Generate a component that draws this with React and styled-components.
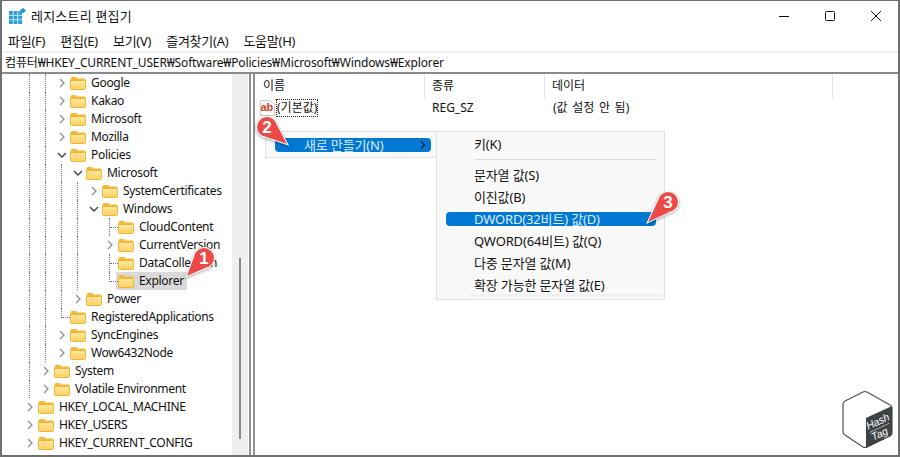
import React from "react";
import styled, { createGlobalStyle } from "styled-components";

const GlobalStyle = createGlobalStyle`
  html, body {
    margin: 0;
    padding: 0;
    background: #fff;
  }
`;

const FONT = `"Noto Sans", "Noto Sans CJK KR", sans-serif`;

const Window = styled.div`
  position: relative;
  box-sizing: border-box;
  width: 900px;
  height: 457px;
  border: 2px solid #707070;
  border-top-width: 1px;
  background: #fff;
  color: #111;
  font-family: ${FONT};
  font-size: 12px;
  line-height: 18px;
  overflow: hidden;
  display: flex;
  flex-direction: column;
`;

const TitleBar = styled.div`
  height: 30px;
  display: flex;
  align-items: center;
  padding-left: 7px;
  flex: none;
`;

const TitleText = styled.span`
  margin-left: 4px;
  font-size: 13px;
  letter-spacing: 0.2px;
`;

const WindowButtons = styled.div`
  margin-left: auto;
  display: flex;
  padding-right: 17px;
  gap: 36px;
`;

const MenuBar = styled.div`
  height: 20px;
  flex: none;
  display: flex;
  align-items: center;
  padding-left: 6px;
  gap: 15px;
  font-size: 13px;
  letter-spacing: -0.25px;
`;

const AddressBar = styled.div`
  flex: none;
  height: 19px;
  border-top: 2px solid #f0f0f0;
  border-bottom: 2px solid #8b8b8b;
  padding-left: 3px;
  display: flex;
  align-items: center;
  white-space: nowrap;
  letter-spacing: -0.15px;
`;

const Body = styled.div`
  flex: 1;
  min-height: 0;
  display: flex;
`;

const TreePanel = styled.div`
  width: 246px;
  flex: none;
  display: flex;
  padding-right: 1px;
  border-right: 2px solid #8f8f96;
  overflow: hidden;
`;

const TreeRows = styled.div`
  width: 230px;
  flex: none;
  padding-left: 20px;
  box-sizing: border-box;
  letter-spacing: -0.3px;
`;

const Row = styled.div`
  height: 18px;
  display: flex;
  align-items: stretch;
  white-space: nowrap;
`;

const Cell = styled.div`
  width: 16px;
  height: 18px;
  flex: none;
  position: relative;
  display: flex;
  align-items: center;
  justify-content: center;
`;

const Guide = styled.div`
  width: 0;
  border-left: 1px dotted #777;
  align-self: ${(p) => (p.$half ? "flex-start" : "stretch")};
  height: ${(p) => (p.$half ? "10px" : "auto")};
  margin-left: -1px;
`;

const Hook = styled.div`
  position: absolute;
  left: 8px;
  top: 9px;
  width: 8px;
  border-top: 1px dotted #777;
`;

const Node = styled.div`
  display: flex;
  align-items: center;
  height: 18px;
  padding-right: 3px;
  background: ${(p) => (p.$selected ? "#d9d9d9" : "transparent")};
  margin-left: ${(p) => (p.$selected ? "-2px" : "0")};
  padding-left: ${(p) => (p.$selected ? "2px" : "0")};
`;

const NodeLabel = styled.span`
  margin-left: 5px;
`;

const ScrollTrack = styled.div`
  width: 16px;
  flex: none;
  background: #efefef;
  padding: 184px 0 0 7px;
  box-sizing: border-box;
`;

const ScrollThumb = styled.div`
  width: 2px;
  height: 181px;
  background: #8a8a8a;
`;

const ListPanel = styled.div`
  flex: 1;
  margin-left: 2px;
  border-left: 2px solid #8f8f96;
  min-width: 0;
`;

const ListHeader = styled.div`
  display: flex;
  height: 25px;
`;

const HeaderCell = styled.div`
  width: ${(p) => p.$width}px;
  box-sizing: border-box;
  padding-left: ${(p) => p.$pad}px;
  border-right: 1px solid #e5e5e5;
  line-height: 24px;
`;

const ListRow = styled.div`
  display: flex;
  height: 18px;
  align-items: center;
`;

const NameCell = styled.div`
  width: 170px;
  flex: none;
  padding-left: 5px;
  box-sizing: border-box;
  display: flex;
  align-items: center;
`;

const ValueCell = styled.div`
  width: ${(p) => p.$width}px;
  flex: none;
  padding-left: ${(p) => p.$pad}px;
  box-sizing: border-box;
  word-spacing: ${(p) => (p.$wide ? "1.5px" : "normal")};
`;

const FocusLabel = styled.span`
  margin-left: 1px;
  outline: 1px dotted #222;
  outline-offset: -1px;
  padding: 0 1px;
  height: 18px;
`;

const Menu = styled.div`
  position: absolute;
  box-sizing: border-box;
  left: ${(p) => p.$left}px;
  top: ${(p) => p.$top}px;
  width: ${(p) => p.$width}px;
  height: ${(p) => p.$height}px;
  background: #f9f9f9;
  border: 1px solid #e2e2e2;
  display: flex;
  flex-direction: column;
  padding: ${(p) => p.$pad};
  font-size: 13px;
  letter-spacing: -0.15px;
`;

const MenuItem = styled.div`
  height: ${(p) => (p.$tall ? 22 : 14)}px;
  width: ${(p) => (p.$width ? `${p.$width}px` : "auto")};
  box-sizing: border-box;
  flex: none;
  border-radius: 4px;
  display: flex;
  align-items: center;
  padding-left: ${(p) => p.$inset}px;
  background: ${(p) => (p.$active ? "#0078d4" : "transparent")};
  color: ${(p) => (p.$active ? "#dfeefa" : "#111")};
  position: relative;
  white-space: nowrap;
`;

const ActiveSlot = styled.div`
  height: 22px;
  display: flex;
  align-items: center;
  flex: none;
`;

const Divider = styled.div`
  height: 1px;
  background: #d9d9d9;
  margin: 4px 7px 4px 29px;
  flex: none;
`;

const FootLine = styled.div`
  height: 3px;
  background: #f0f0f0;
  margin: -2px 1px 0 23px;
  flex: none;
`;

const SubArrow = styled.svg`
  position: absolute;
  right: 4px;
  top: 3px;
`;

const Overlay = styled.svg`
  position: absolute;
  left: ${(p) => p.$left}px;
  top: ${(p) => p.$top}px;
  overflow: visible;
  pointer-events: none;
`;

const Folder = () => (
  <svg width="16" height="14" viewBox="0 0 16 14">
    <defs>
      <linearGradient id="fold" x1="0" y1="0" x2="0" y2="1">
        <stop offset="0" stopColor="#ffe9a6" />
        <stop offset="1" stopColor="#fbd05b" />
      </linearGradient>
    </defs>
    <path d="M0.5 2.5 Q0.5 1 2 1 H6 L7.5 2.6 H14.5 Q15.5 2.6 15.5 3.6 V5 H0.5Z" fill="#f5b92f" />
    <path d="M0.5 4.5 H15.5 V12.5 Q15.5 13.5 14.5 13.5 H1.5 Q0.5 13.5 0.5 12.5Z" fill="url(#fold)" stroke="#eeb63e" strokeWidth="1" />
  </svg>
);

const Chevron = ({ open }) =>
  open ? (
    <svg width="10" height="10" viewBox="0 0 10 10" fill="none">
      <path d="M1 3 L5 7 L9 3" stroke="#404040" strokeWidth="1.3" />
    </svg>
  ) : (
    <svg width="10" height="10" viewBox="0 0 10 10" fill="none">
      <path d="M3 1 L7 5 L3 9" stroke="#8f8f8f" strokeWidth="1.3" />
    </svg>
  );

const AppIcon = () => (
  <svg width="18" height="16" viewBox="0 0 18 16">
    <rect x="0" y="3" width="13" height="13" fill="#2b9fdf" />
    <path d="M0 7.4H13M0 11.7H13M4.3 3V16M8.7 3V16" stroke="#d6eefa" strokeWidth="0.9" />
    <path d="M14 0 L17 2.6 L14 5.2 L11 2.6Z" fill="#1f8fd0" />
  </svg>
);

const AbIcon = () => (
  <svg width="15" height="16" viewBox="0 0 15 16">
    <path d="M0.5 0.5 H10 L14.5 4.5 V15.5 H0.5Z" fill="#fff" stroke="#c9c9c9" />
    <text x="0.5" y="11" fontFamily="Liberation Sans, sans-serif" fontWeight="700" fontSize="11" fill="#d83b1c">ab</text>
  </svg>
);

const WinMin = () => (
  <svg width="10" height="10" viewBox="0 0 10 10"><path d="M0 5.5H10" stroke="#111" /></svg>
);
const WinMax = () => (
  <svg width="10" height="10" viewBox="0 0 10 10" fill="none"><rect x="0.5" y="0.5" width="9" height="9" rx="1" stroke="#111" /></svg>
);
const WinClose = () => (
  <svg width="10" height="10" viewBox="0 0 10 10" fill="none"><path d="M0 0L10 10M10 0L0 10" stroke="#111" /></svg>
);

const Badge = ({ n, cx, cy, tipX, tipY }) => {
  const dx = tipX - cx;
  const dy = tipY - cy;
  const len = Math.hypot(dx, dy);
  const ux = dx / len;
  const uy = dy / len;
  const base = 8;
  const a = `${30 + ux * 6 - uy * base},${30 + uy * 6 + ux * base}`;
  const b = `${30 + ux * 6 + uy * base},${30 + uy * 6 - ux * base}`;
  const tip = `${30 + dx},${30 + dy}`;
  return (
    <Overlay $left={cx - 30} $top={cy - 30} width="60" height="60" viewBox="0 0 60 60">
      <g style={{ filter: "drop-shadow(0 1px 1.5px rgba(0,0,0,.35))" }}>
        <polygon points={`${a} ${tip} ${b}`} fill="#fff" stroke="#fff" strokeWidth="2" />
        <circle cx="30" cy="30" r="11" fill="#fff" />
      </g>
      <polygon points={`${a} ${tip} ${b}`} fill="#ea4a48" />
      <circle cx="30" cy="30" r="10" fill="#ea4a48" />
      <text x="30" y="36" textAnchor="middle" fontFamily="Liberation Sans, sans-serif" fontWeight="700" fontSize="17" fill="#fff">{n}</text>
    </Overlay>
  );
};

const HashTagLogo = () => (
  <Overlay $left={838} $top={388} width="54" height="60" viewBox="0 0 54 60">
    <path d="M3 15 Q3 13 5 12 L23 3 Q25 2 27 3 L50 16 Q52 17 52 19 V44 Q52 46 50 47 L27 58 Q25 59 23 58 L5 46 Q3 45 3 43Z" fill="#fff" stroke="#4a4f52" strokeWidth="1.2" />
    <path d="M26 29 L52 17 V44 Q52 46 50 47 L26 59Z" fill="#3d4245" />
    <g transform="rotate(-25 39 38)" fill="#fff" fontFamily="Liberation Sans, sans-serif" fontStyle="italic">
      <text x="28" y="36" fontSize="10.5">Hash</text>
      <path d="M28 39H50" stroke="#c9c9c9" strokeWidth="0.7" />
      <text x="28" y="48" fontSize="10.5">Tag</text>
    </g>
  </Overlay>
);

const tree = [
  { label: "Google", depth: 2, kind: "closed", guides: [0, 1] },
  { label: "Kakao", depth: 2, kind: "closed", guides: [0, 1] },
  { label: "Microsoft", depth: 2, kind: "closed", guides: [0, 1] },
  { label: "Mozilla", depth: 2, kind: "closed", guides: [0, 1] },
  { label: "Policies", depth: 2, kind: "open", guides: [0, 1] },
  { label: "Microsoft", depth: 3, kind: "open", guides: [0, 1, 2] },
  { label: "SystemCertificates", depth: 4, kind: "closed", guides: [0, 1, 2, 3] },
  { label: "Windows", depth: 4, kind: "open", guides: [0, 1, 2, 3] },
  { label: "CloudContent", depth: 5, kind: "leaf", guides: [0, 1, 2, 3] },
  { label: "CurrentVersion", depth: 5, kind: "closed", guides: [0, 1, 2, 3] },
  { label: "DataCollection", depth: 5, kind: "leaf", guides: [0, 1, 2, 3] },
  { label: "Explorer", depth: 5, kind: "last", guides: [0, 1, 2, 3], selected: true },
  { label: "Power", depth: 3, kind: "closed", guides: [0, 1, 2] },
  { label: "RegisteredApplications", depth: 2, kind: "last", guides: [0, 1] },
  { label: "SyncEngines", depth: 2, kind: "closed", guides: [0, 1] },
  { label: "Wow6432Node", depth: 2, kind: "closed", guides: [0, 1] },
  { label: "System", depth: 1, kind: "closed", guides: [0] },
  { label: "Volatile Environment", depth: 1, kind: "closed", guides: [0] },
  { label: "HKEY_LOCAL_MACHINE", depth: 0, kind: "closed", guides: [] },
  { label: "HKEY_USERS", depth: 0, kind: "closed", guides: [] },
  { label: "HKEY_CURRENT_CONFIG", depth: 0, kind: "closed", guides: [] },
];

const TreeRow = ({ item }) => {
  const cols = [];
  for (let i = 0; i < item.depth; i++) {
    cols.push(<Cell key={i}>{item.guides.includes(i) && <Guide />}</Cell>);
  }
  return (
    <Row>
      {cols}
      <Cell>
        {item.kind === "open" && <Chevron open />}
        {item.kind === "closed" && <Chevron />}
        {item.kind === "leaf" && <Guide />}
        {item.kind === "last" && <Guide $half />}
        {(item.kind === "leaf" || item.kind === "last") && <Hook />}
      </Cell>
      <Node $selected={item.selected}>
        <Folder />
        <NodeLabel>{item.label}</NodeLabel>
      </Node>
    </Row>
  );
};

const App = () => (
  <>
    <GlobalStyle />
    <Window>
      <TitleBar>
        <AppIcon />
        <TitleText>레지스트리 편집기</TitleText>
        <WindowButtons>
          <WinMin />
          <WinMax />
          <WinClose />
        </WindowButtons>
      </TitleBar>
      <MenuBar>
        <span>파일(F)</span>
        <span>편집(E)</span>
        <span>보기(V)</span>
        <span>즐겨찾기(A)</span>
        <span>도움말(H)</span>
      </MenuBar>
      <AddressBar>컴퓨터₩HKEY_CURRENT_USER₩Software₩Policies₩Microsoft₩Windows₩Explorer</AddressBar>
      <Body>
        <TreePanel>
          <TreeRows>
            {tree.map((item, i) => (
              <TreeRow key={i} item={item} />
            ))}
          </TreeRows>
          <ScrollTrack>
            <ScrollThumb />
          </ScrollTrack>
        </TreePanel>
        <ListPanel>
          <ListHeader>
            <HeaderCell $width={170} $pad={8}>이름</HeaderCell>
            <HeaderCell $width={120} $pad={7}>종류</HeaderCell>
            <HeaderCell $width={288} $pad={7}>데이터</HeaderCell>
          </ListHeader>
          <ListRow>
            <NameCell>
              <AbIcon />
              <FocusLabel>(기본값)</FocusLabel>
            </NameCell>
            <ValueCell $width={120} $pad={7}>REG_SZ</ValueCell>
            <ValueCell $width={288} $pad={8} $wide>(값 설정 안 됨)</ValueCell>
          </ListRow>
        </ListPanel>
      </Body>

      <Menu $left={263} $top={130} $width={172} $height={27} $pad="6px 5px 0 9px">
        <MenuItem $active $inset={29}>
          새로 만들기(N)
          <SubArrow width="8" height="8" viewBox="0 0 8 8" fill="none">
            <path d="M2 0.5L5.5 4L2 7.5" stroke="#123" strokeWidth="1.2" />
          </SubArrow>
        </MenuItem>
      </Menu>
      <Menu $left={434} $top={130} $width={229} $height={169} $pad="1px 0 0 9px">
        <MenuItem $tall $inset={28}>키(K)</MenuItem>
        <Divider />
        <MenuItem $tall $inset={28}>문자열 값(S)</MenuItem>
        <MenuItem $tall $inset={28}>이진값(B)</MenuItem>
        <ActiveSlot>
          <MenuItem $active $inset={28} $width={210}>DWORD(32비트) 값(D)</MenuItem>
        </ActiveSlot>
        <MenuItem $tall $inset={28}>QWORD(64비트) 값(Q)</MenuItem>
        <MenuItem $tall $inset={28}>다중 문자열 값(M)</MenuItem>
        <MenuItem $tall $inset={28}>확장 가능한 문자열 값(E)</MenuItem>
        <FootLine />
      </Menu>

      <Badge n="1" cx={202} cy={257} tipX={185} tipY={275} />
      <Badge n="2" cx={265} cy={126} tipX={285} tipY={143} />
      <Badge n="3" cx={666} cy={201} tipX={646} tipY={221} />
      <HashTagLogo />
    </Window>
  </>
);

export default App;
